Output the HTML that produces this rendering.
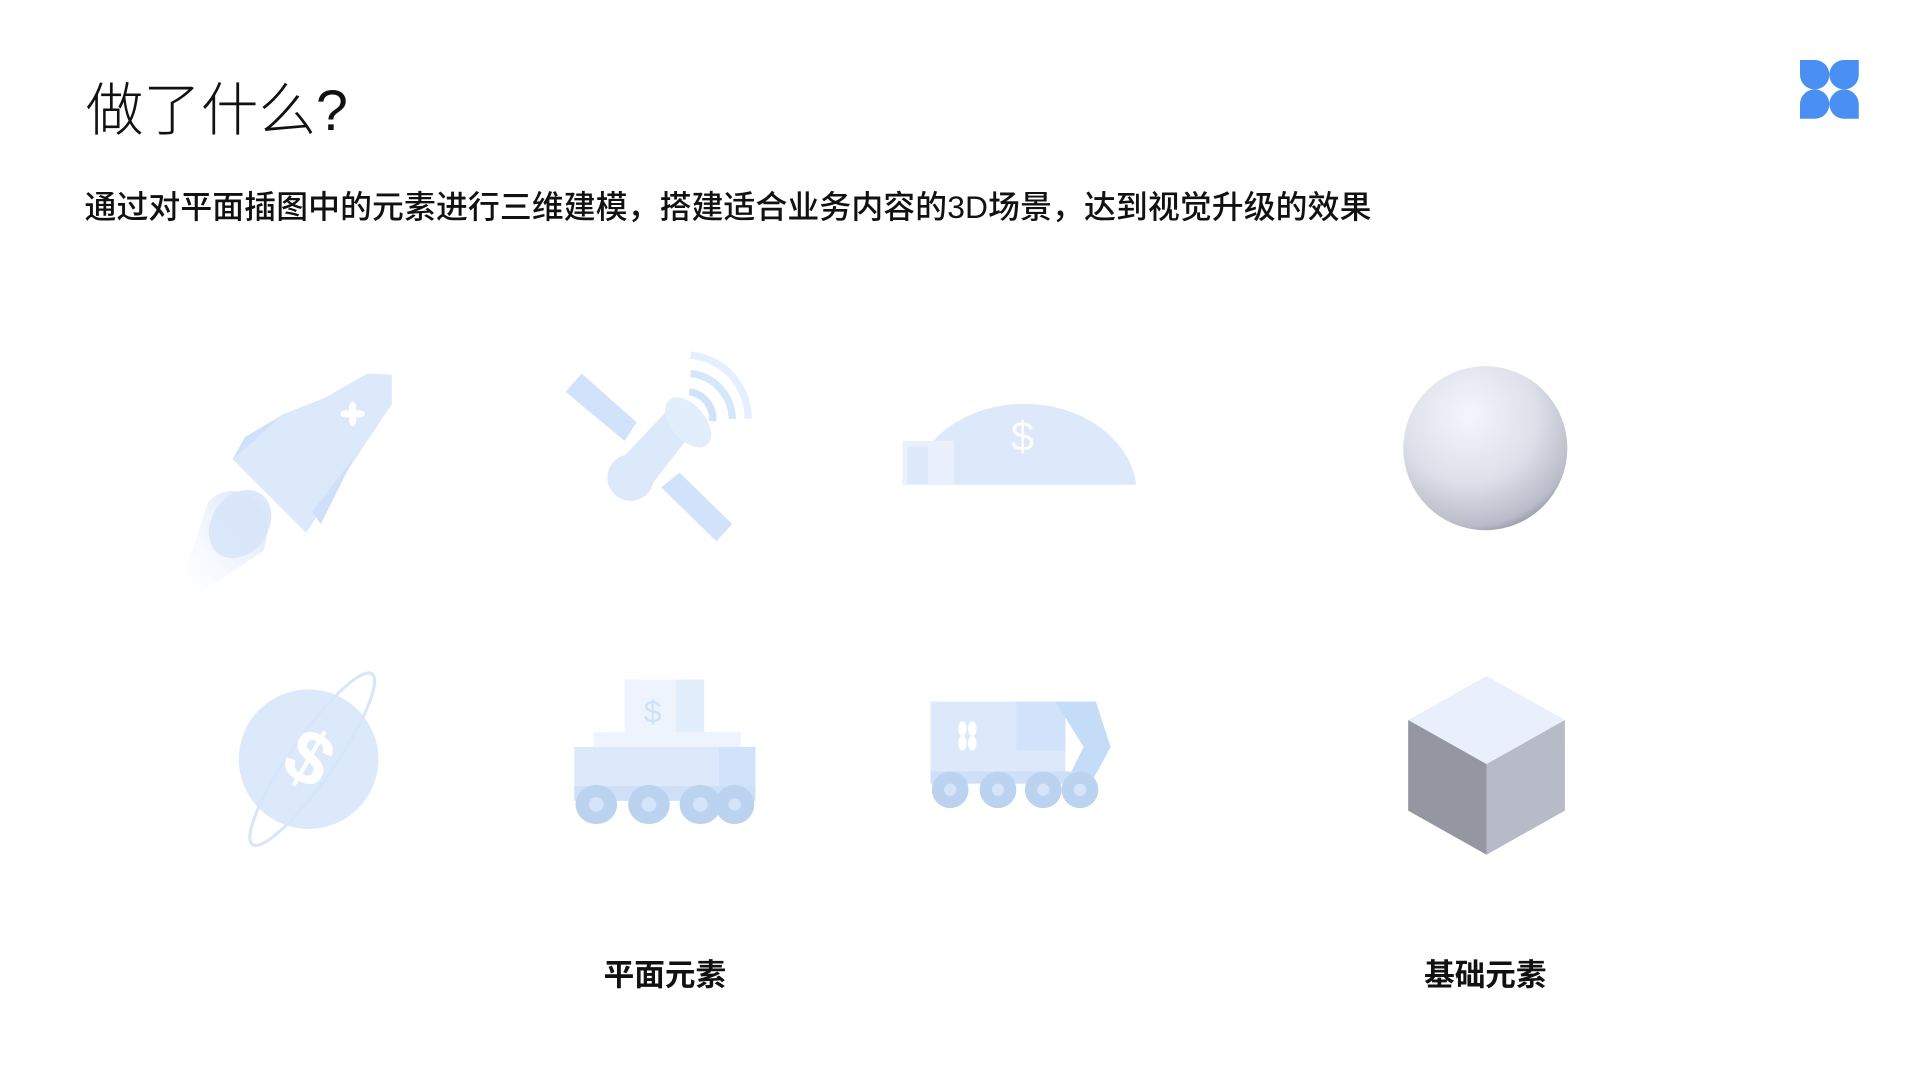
<!DOCTYPE html>
<html><head><meta charset="utf-8"><style>
html,body{margin:0;padding:0;background:#fff;width:1920px;height:1080px;overflow:hidden}
svg{display:block}
text{font-family:"Liberation Sans","Noto Sans CJK SC",sans-serif}
</style></head><body>
<svg width="1920" height="1080" viewBox="0 0 1568 882" xmlns="http://www.w3.org/2000/svg">
<defs>
<radialGradient id="sph" cx="0.4" cy="0.3" r="0.75">
<stop offset="0" stop-color="#f4f6fb"/><stop offset="0.55" stop-color="#dde0ea"/><stop offset="0.9" stop-color="#b9bcc8"/><stop offset="1" stop-color="#8e919c"/></radialGradient>
<linearGradient id="flame" x1="1" y1="0" x2="0" y2="1">
<stop offset="0" stop-color="#cfe1fa"/><stop offset="1" stop-color="#fff" stop-opacity="0"/></linearGradient>
</defs>
<text x="70" y="106" font-size="47" font-weight="300" fill="#111">做了什么?</text>
<text x="69" y="178" font-size="26" font-weight="500" fill="#111" textLength="1051">通过对平面插图中的元素进行三维建模，搭建适合业务内容的3D场景，达到视觉升级的效果</text>
<!-- logo -->
<g fill="#4a90f2">
<path d="M1470 49 H1482 A12 12 0 0 1 1494 61 A12 12 0 0 1 1482 73 A12 12 0 0 1 1470 61 Z"/>
<path d="M1518 49 H1506 A12 12 0 0 0 1494 61 A12 12 0 0 0 1506 73 A12 12 0 0 0 1518 61 Z"/>
<path d="M1470 97 H1482 A12 12 0 0 0 1494 85 A12 12 0 0 0 1482 73 A12 12 0 0 0 1470 85 Z"/>
<path d="M1518 97 H1506 A12 12 0 0 1 1494 85 A12 12 0 0 1 1506 73 A12 12 0 0 1 1518 85 Z"/>
</g>
<!-- rocket -->
<path d="M140 500 L170 410 Q185 395 205 405 Q225 420 215 450 Z" fill="url(#flame)"/>
<ellipse cx="196" cy="428" rx="23" ry="30" transform="rotate(35 196 428)" fill="#d8e6fa" opacity="0.9"/>
<path d="M190 375 L200 357 L232 338 L268 330 L250 435 Z" fill="#cfe1fa"/>
<path d="M190 375 L232 338 L265 325 L300 305 L320 306 L320 330 L300 360 L250 435 Z" fill="#dce9fb"/>
<path d="M255 418 L290 372 L262 428 Z" fill="#cfe1fa"/>
<g fill="#fff" transform="translate(288 338)"><ellipse cx="0" cy="-5" rx="3" ry="5"/><ellipse cx="0" cy="5" rx="3" ry="5"/><ellipse cx="-5" cy="0" rx="5" ry="3"/><ellipse cx="5" cy="0" rx="5" ry="3"/></g>
<!-- satellite -->
<path d="M462 320 L475 305 L520 345 L510 360 Z" fill="#d0e3fb"/>
<path d="M540 398 L555 386 L598 428 L585 442 Z" fill="#d0e3fb"/>
<circle cx="515" cy="390" r="19" fill="#dce9fb"/>
<path d="M498 385 L545 335 L560 360 L525 405 Z" fill="#dce9fb"/>
<ellipse cx="562" cy="345" rx="14" ry="24" transform="rotate(-40 562 345)" fill="#e3eefc"/>
<path d="M563 320 A22 22 0 0 1 582 344" stroke="#d0e3fb" stroke-width="6" fill="none"/>
<path d="M564 305 A38 38 0 0 1 598 342" stroke="#d6e6fb" stroke-width="6" fill="none"/>
<path d="M564 290 A52 52 0 0 1 611 342" stroke="#e6effd" stroke-width="6" fill="none"/>
<!-- dome -->
<path d="M745 396 A92 74 0 0 1 928 396 Z" fill="#dde9fb"/>
<rect x="737" y="360" width="42" height="36" fill="#eaf1fd"/>
<rect x="741" y="365" width="17" height="30" fill="#dce9fb"/>
<text x="835" y="368" font-size="34" fill="#fff" text-anchor="middle" opacity="0.9">$</text>
<!-- planet -->
<circle cx="252" cy="620" r="57" fill="#dce9fb"/>
<ellipse cx="255" cy="620" rx="18" ry="85" transform="rotate(35 255 620)" fill="none" stroke="#d6e6fb" stroke-width="2.5"/>
<text x="252" y="640" font-size="62" font-weight="bold" fill="#fff" text-anchor="middle" transform="rotate(30 252 620)">$</text>
<!-- rover -->
<rect x="510" y="555" width="65" height="45" fill="#eef4fd"/>
<rect x="552" y="555" width="23" height="45" fill="#e3eefc"/>
<text x="533" y="590" font-size="26" fill="#cfe1fa" text-anchor="middle">$</text>
<rect x="485" y="598" width="120" height="12" fill="#eef4fd"/>
<rect x="469" y="610" width="148" height="35" fill="#dce9fb"/>
<rect x="587" y="610" width="30" height="35" fill="#d0e3fb"/>
<rect x="469" y="642" width="148" height="12" fill="#cde0f8"/>
<g fill="#bcd3ef"><ellipse cx="600" cy="657" rx="16" ry="16"/><ellipse cx="572" cy="657" rx="17" ry="16"/><ellipse cx="530" cy="657" rx="17" ry="16"/><ellipse cx="487" cy="657" rx="17" ry="16"/></g>
<g fill="#d3e4fb"><circle cx="487" cy="657" r="6"/><circle cx="530" cy="657" r="6"/><circle cx="572" cy="657" r="6"/><circle cx="600" cy="657" r="5"/></g>
<!-- truck -->
<rect x="760" y="573" width="110" height="62" fill="#dce9fb"/>
<rect x="830" y="573" width="40" height="40" fill="#d0e3fb"/>
<path d="M862 573 L895 573 L907 610 L888 645 L870 640 L885 610 Z" fill="#c5dcf8"/>
<rect x="760" y="630" width="120" height="10" fill="#cde0f8"/>
<g fill="#fff" transform="translate(790 601)"><ellipse cx="-4" cy="-6" rx="3.5" ry="6"/><ellipse cx="4" cy="-6" rx="3.5" ry="6"/><ellipse cx="-4" cy="6" rx="3.5" ry="6"/><ellipse cx="4" cy="6" rx="3.5" ry="6"/></g>
<g fill="#bcd3ef"><circle cx="882" cy="645" r="15"/><circle cx="852" cy="645" r="15"/><circle cx="815" cy="645" r="15"/><circle cx="776" cy="645" r="15"/></g>
<g fill="#d3e4fb"><circle cx="776" cy="645" r="5"/><circle cx="815" cy="645" r="5"/><circle cx="852" cy="645" r="5"/><circle cx="882" cy="645" r="5"/></g>
<!-- sphere -->
<circle cx="1213" cy="366" r="67" fill="url(#sph)"/>
<!-- cube -->
<path d="M1214 552 L1278 588 L1214 624 L1150 588 Z" fill="#eaeffc"/>
<path d="M1150 588 L1214 624 L1214 698 L1150 662 Z" fill="#9497a2"/>
<path d="M1214 624 L1278 588 L1278 662 L1214 698 Z" fill="#b7bbc7"/>
<text x="543" y="805" font-size="25" font-weight="bold" fill="#111" text-anchor="middle">平面元素</text>
<text x="1213" y="805" font-size="25" font-weight="bold" fill="#111" text-anchor="middle">基础元素</text>
</svg>
</body></html>
